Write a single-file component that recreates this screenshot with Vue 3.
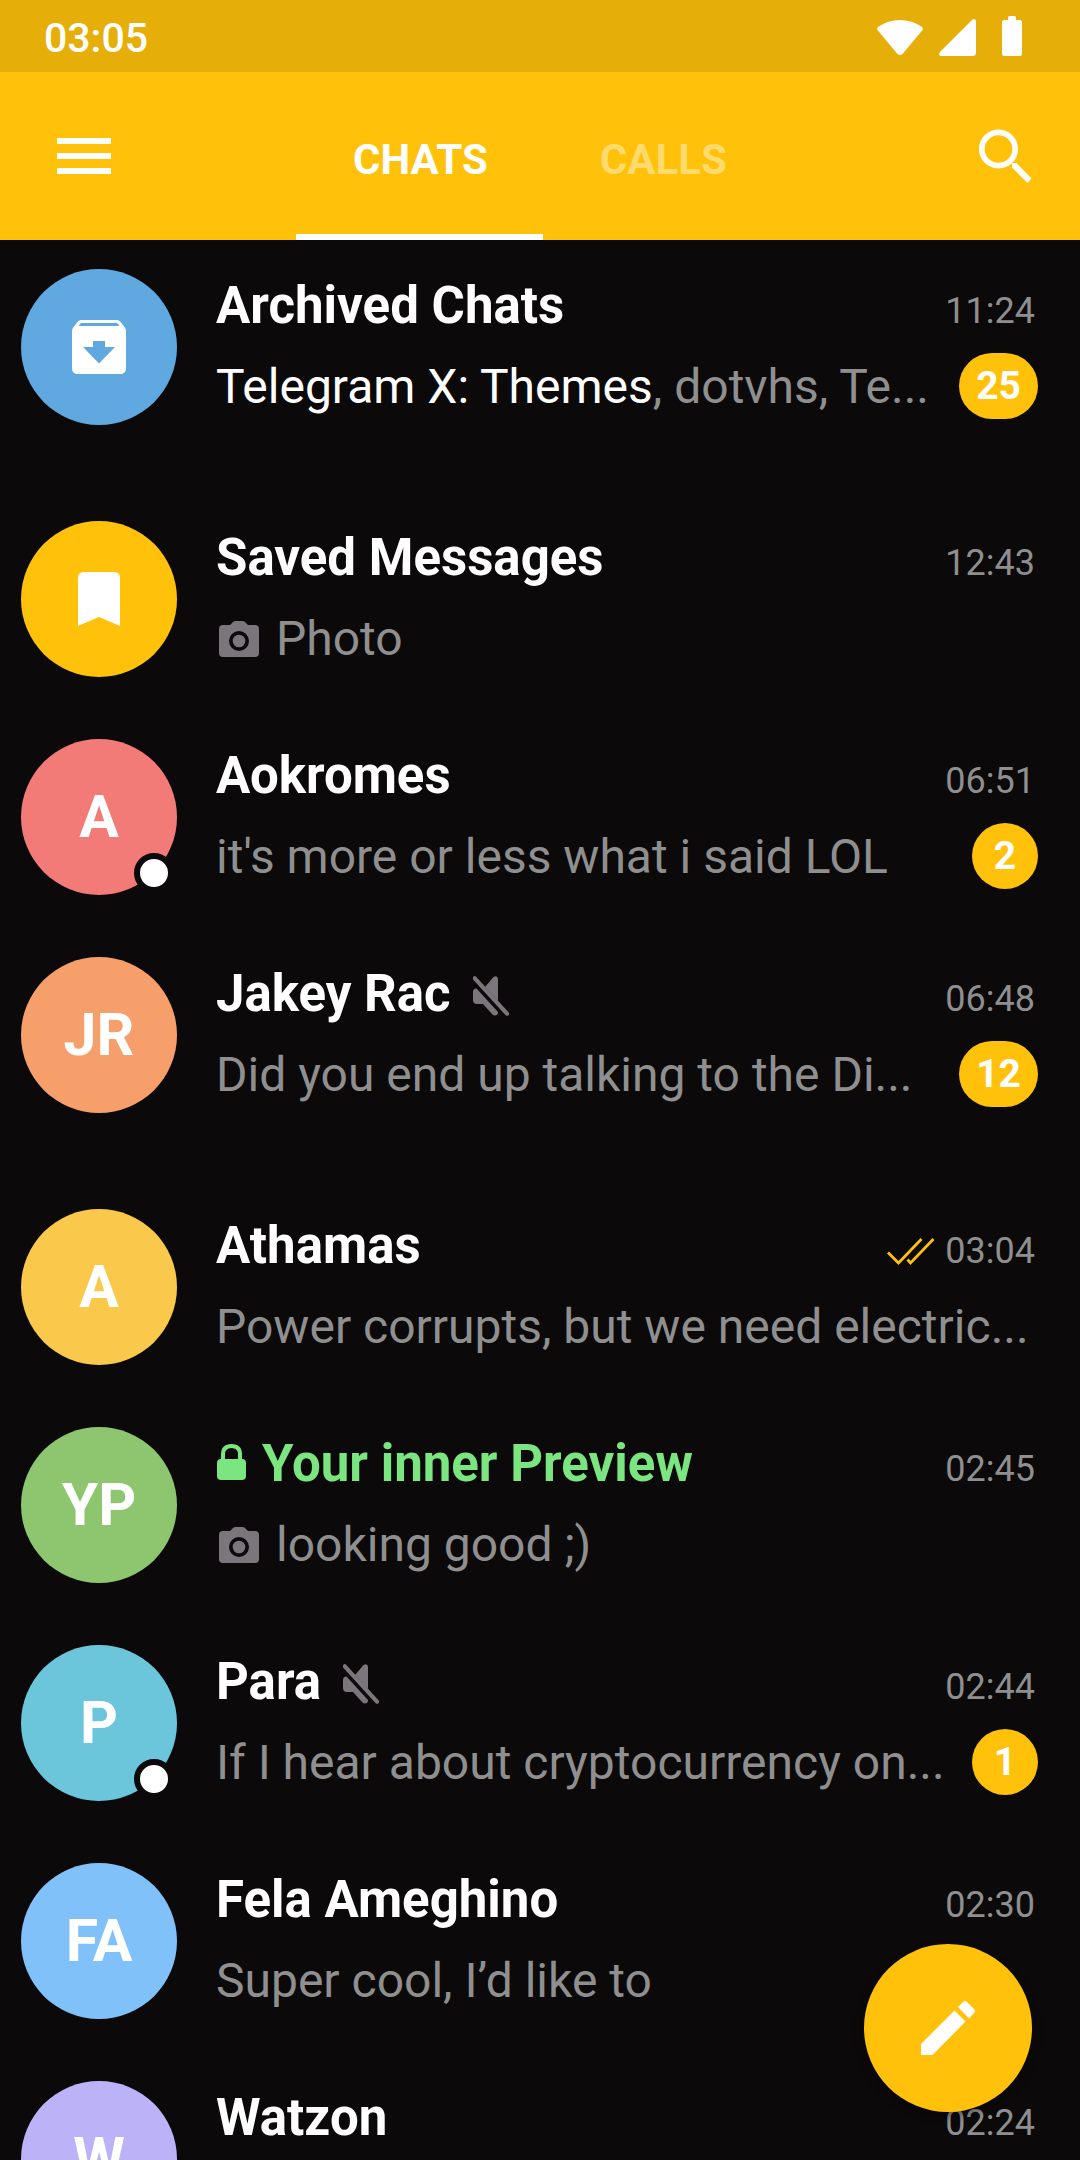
<script setup>
import { ref } from 'vue'

const tabs = ['CHATS', 'CALLS']
const activeTab = ref('CHATS')

// Each section is separated from the next one by a wider gap.
const sections = [
  [
    { id: 1, name: 'Archived Chats', time: '11:24', icon: 'archive', color: '#60a8e0', lead: 'Telegram X: Themes', text: ', dotvhs, Te...', unread: 25 },
  ],
  [
    { id: 2, name: 'Saved Messages', time: '12:43', icon: 'bookmark', color: '#ffc10a', photo: true, text: 'Photo' },
    { id: 3, name: 'Aokromes', time: '06:51', initials: 'A', color: '#f27a77', online: true, text: "it's more or less what i said LOL", unread: 2 },
    { id: 4, name: 'Jakey Rac', time: '06:48', initials: 'JR', color: '#f69f6b', muted: true, text: 'Did you end up talking to the Di...', unread: 12 },
  ],
  [
    { id: 5, name: 'Athamas', time: '03:04', initials: 'A', color: '#fac84b', read: true, text: 'Power corrupts, but we need electric...' },
    { id: 6, name: 'Your inner Preview', time: '02:45', initials: 'YP', color: '#8dc66f', secret: true, photo: true, text: 'looking good ;)' },
    { id: 7, name: 'Para', time: '02:44', initials: 'P', color: '#6bc6dc', muted: true, online: true, text: 'If I hear about cryptocurrency on...', unread: 1 },
    { id: 8, name: 'Fela Ameghino', time: '02:30', initials: 'FA', color: '#80c1fa', text: 'Super cool, I’d like to' },
    { id: 9, name: 'Watzon', time: '02:24', initials: 'W', color: '#bcb2f8', text: '' },
  ],
]
</script>

<template>
  <div class="app">
    <div class="status">
      <span class="clock">03:05</span>
      <div class="indicators">
        <svg class="wifi" width="46" height="36" viewBox="0 0 46 36" aria-hidden="true">
          <path d="M1 7Q11 0 23 0T45 7Q46.500 8.500 45.500 10L26 33.500Q23 36.500 20 33.500L.5 10Q-.5 8.500 1 7Z" />
        </svg>
        <svg class="signal" width="37" height="37" viewBox="0 0 37 37" aria-hidden="true">
          <path d="M33 1Q34.500-.5 36 .5 37 1 37 2.500V33.500Q37 37 33.500 37H2Q.5 37 0 35.500 0 34.500 1 33Z" />
        </svg>
        <svg class="battery" width="20" height="40" viewBox="0 0 20 40" aria-hidden="true">
          <path d="M6 4V1.500Q6 0 7.500 0H12.500Q14 0 14 1.500V4H17.500Q20 4 20 6.500V37.500Q20 40 17.500 40H2.500Q0 40 0 37.500V6.500Q0 4 2.500 4Z" />
        </svg>
      </div>
    </div>

    <header class="bar">
      <button class="icon-button menu" type="button" aria-label="Menu">
        <svg width="54" height="36" viewBox="0 0 54 36" aria-hidden="true">
          <path d="M0 0H54V6H0ZM0 15H54V21H0ZM0 30H54V36H0Z" />
        </svg>
      </button>
      <nav class="tabs">
        <button
          v-for="tab in tabs"
          :key="tab"
          class="tab"
          :class="{ active: tab === activeTab }"
          type="button"
          @click="activeTab = tab"
        >{{ tab }}</button>
      </nav>
      <button class="icon-button search" type="button" aria-label="Search">
        <svg width="53" height="54" viewBox="0 0 53 54" aria-hidden="true">
          <circle cx="19.500" cy="20" r="16.700" fill="none" stroke="#fff" stroke-width="5.700" />
          <path d="M33 34H37.500L52.500 49.500 48.500 54 33 38.500Z" />
        </svg>
      </button>
    </header>

    <main class="list">
      <section v-for="(chats, index) in sections" :key="index" class="section">
        <a v-for="chat in chats" :key="chat.id" class="chat" href="#">
          <div class="avatar" :style="{ background: chat.color }">
            <svg v-if="chat.icon === 'archive'" width="54" height="54" viewBox="0 0 54 54" aria-hidden="true">
              <path fill-rule="evenodd" d="M9 0H45Q47 0 48.500 2L52.500 7Q54 9 54 11V48Q54 54 48 54H6Q0 54 0 48V11Q0 9 1.500 7L5.500 2Q7 0 9 0ZM9 3 6.500 6H47.500L45 3ZM21 21V27H11L27 43.500 43 27H33V21Z" />
            </svg>
            <svg v-else-if="chat.icon === 'bookmark'" width="42" height="54" viewBox="0 0 42 54" aria-hidden="true">
              <path d="M6 0H36Q42 0 42 6V54L21 45 0 54V6Q0 0 6 0Z" />
            </svg>
            <template v-else>{{ chat.initials }}</template>
            <span v-if="chat.online" class="online"></span>
          </div>

          <div class="body">
            <div class="line top">
              <svg v-if="chat.secret" class="lock" width="29" height="36" viewBox="0 0 29 36" aria-hidden="true">
                <path fill-rule="evenodd" d="M4 15V10.500Q4 0 14.500 0T25 10.500V15Q29 15 29 19V32Q29 36 25 36H4Q0 36 0 32V19Q0 15 4 15ZM8 15H21V10.500Q21 4 14.500 4T8 10.500Z" />
              </svg>
              <h2 class="name" :class="{ secret: chat.secret }">{{ chat.name }}</h2>
              <svg v-if="chat.muted" class="mute" width="36" height="40" viewBox="0 0 36 40" aria-hidden="true">
                <path d="M12 11 20.500 1Q22 0 23.500 .5 25 1 25 3V25ZM3.500 12.500 25 36Q25 39.500 22 39.500 20.500 39.500 19.500 38.500L10 28H4Q0 28 0 24V16Q0 12.500 3.500 12.500Z" />
                <path d="M1.800 2.300 34 37.700" fill="none" stroke="#7b767b" stroke-width="4.200" stroke-linecap="round" />
              </svg>
              <div class="meta">
                <svg v-if="chat.read" width="48" height="28" viewBox="0 0 48 28" aria-hidden="true">
                  <path d="M1 15.500 11.500 26 34.500 2M20.500 22.500 23.500 26 46.500 2" fill="none" stroke="#ffc10a" stroke-width="2.700" />
                </svg>
                <time>{{ chat.time }}</time>
              </div>
            </div>
            <div class="line preview">
              <svg v-if="chat.photo" class="camera" width="40" height="36" viewBox="0 0 40 36" aria-hidden="true">
                <path fill-rule="evenodd" d="M11 4 14 1Q15 0 16.500 0H23.500Q25 0 26 1L29 4H36Q40 4 40 8V32Q40 36 36 36H4Q0 36 0 32V8Q0 4 4 4ZM20 10A10 10 0 1 0 20 30A10 10 0 1 0 20 10Z" />
                <circle cx="20" cy="20" r="6.300" />
              </svg>
              <p class="text"><span v-if="chat.lead" class="lead">{{ chat.lead }}</span>{{ chat.text }}</p>
              <span v-if="chat.unread" class="badge">{{ chat.unread }}</span>
            </div>
          </div>
        </a>
      </section>
    </main>

    <button class="compose" type="button" aria-label="New message">
      <svg width="54" height="54" viewBox="0 0 54 54" aria-hidden="true">
        <path d="M0 43 33.500 9.500 44.500 20.500 11.500 54H0ZM37 6 42 1Q44 -1 46 1L53 8Q55 10 53 12L48 17.500Z" />
      </svg>
    </button>
  </div>
</template>

<style>
body {
  background: #0b090a;
}
</style>

<style scoped>
.app {
  position: relative;
  display: flex;
  flex-direction: column;
  height: 100vh;
  overflow: hidden;
  background: #0b090a;
  color: #fff;
  font-family: Roboto, "Noto Sans", sans-serif;
}

svg {
  display: block;
  flex: none;
  fill: #fff;
}

button {
  border: 0;
  padding: 0;
  background: none;
  color: inherit;
  font: inherit;
  cursor: pointer;
}

.status {
  display: flex;
  flex: none;
  align-items: center;
  justify-content: space-between;
  height: 72px;
  padding: 0 58px 0 44px;
  background: #e6ae09;
}

.clock {
  padding-top: 4px;
  font-size: 41px;
  font-weight: 500;
  line-height: 48px;
}

.indicators {
  display: flex;
  align-items: flex-end;
  gap: 16px;
}

.battery {
  margin-left: 10px;
}

.bar {
  display: flex;
  flex: none;
  height: 168px;
  background: #ffc10a;
}

.icon-button {
  display: grid;
  place-items: center;
  flex: none;
  width: 168px;
}

.search {
  width: 150px;
}

.tabs {
  display: flex;
  flex: 1;
  padding-left: 128px;
}

.tab {
  padding: 14px 55px 0 57px;
  border-bottom: 6px solid transparent;
  color: #ffda6c;
  font-size: 42px;
  font-weight: 700;
  line-height: 48px;
}

.tab.active {
  border-color: #fff;
  color: #fff;
}

.list {
  flex: 1;
  min-height: 0;
  overflow: auto;
  scrollbar-width: none;
}

.section + .section {
  margin-top: 34px;
}

.chat {
  display: flex;
  gap: 39px;
  height: 218px;
  box-sizing: border-box;
  padding: 29px 42px 0 21px;
  color: inherit;
  text-decoration: none;
}

.avatar {
  position: relative;
  display: flex;
  flex: none;
  align-items: center;
  justify-content: center;
  width: 156px;
  height: 156px;
  border-radius: 50%;
  font-size: 59px;
  font-weight: 700;
  line-height: 60px;
}

.online {
  position: absolute;
  right: 3px;
  bottom: 2px;
  width: 28px;
  height: 28px;
  border: 6px solid #0b090a;
  border-radius: 50%;
  background: #fff;
}

.body {
  flex: 1;
  min-width: 0;
  padding-top: 7px;
}

.line {
  display: flex;
  align-items: center;
}

.top {
  height: 60px;
  margin-bottom: 18px;
}

.name {
  margin: 0;
  font-size: 51px;
  font-weight: 700;
  line-height: 60px;
  white-space: nowrap;
}

.secret {
  color: #7be57f;
}

.lock {
  margin: 0 16px 4px 1px;
  fill: #7be57f;
}

.mute {
  margin: 3px 0 0 22px;
  fill: #7b767b;
}

.meta {
  display: flex;
  align-items: center;
  gap: 10px;
  margin-left: auto;
  padding: 10px 3px 0 0;
  color: #8f8f8f;
  font-size: 36px;
  line-height: 50px;
}

.preview {
  height: 66px;
}

.camera {
  margin: 0 17px 0 3px;
  fill: #7b767b;
}

.text {
  flex: 1;
  min-width: 0;
  margin: 0;
  overflow: hidden;
  color: #8f8f8f;
  font-size: 48px;
  line-height: 66px;
  white-space: nowrap;
}

.lead {
  color: #fff;
}

.badge {
  flex: none;
  box-sizing: border-box;
  min-width: 66px;
  margin-bottom: 2px;
  padding: 0 17px;
  border-radius: 33px;
  background: #ffc10a;
  font-size: 39px;
  font-weight: 700;
  line-height: 66px;
  text-align: center;
}

.compose {
  position: absolute;
  right: 48px;
  bottom: 48px;
  display: grid;
  place-items: center;
  width: 168px;
  height: 168px;
  border-radius: 50%;
  background: #ffc10a;
  box-shadow: 0 4px 10px rgba(0, 0, 0, 0.4);
}
</style>
